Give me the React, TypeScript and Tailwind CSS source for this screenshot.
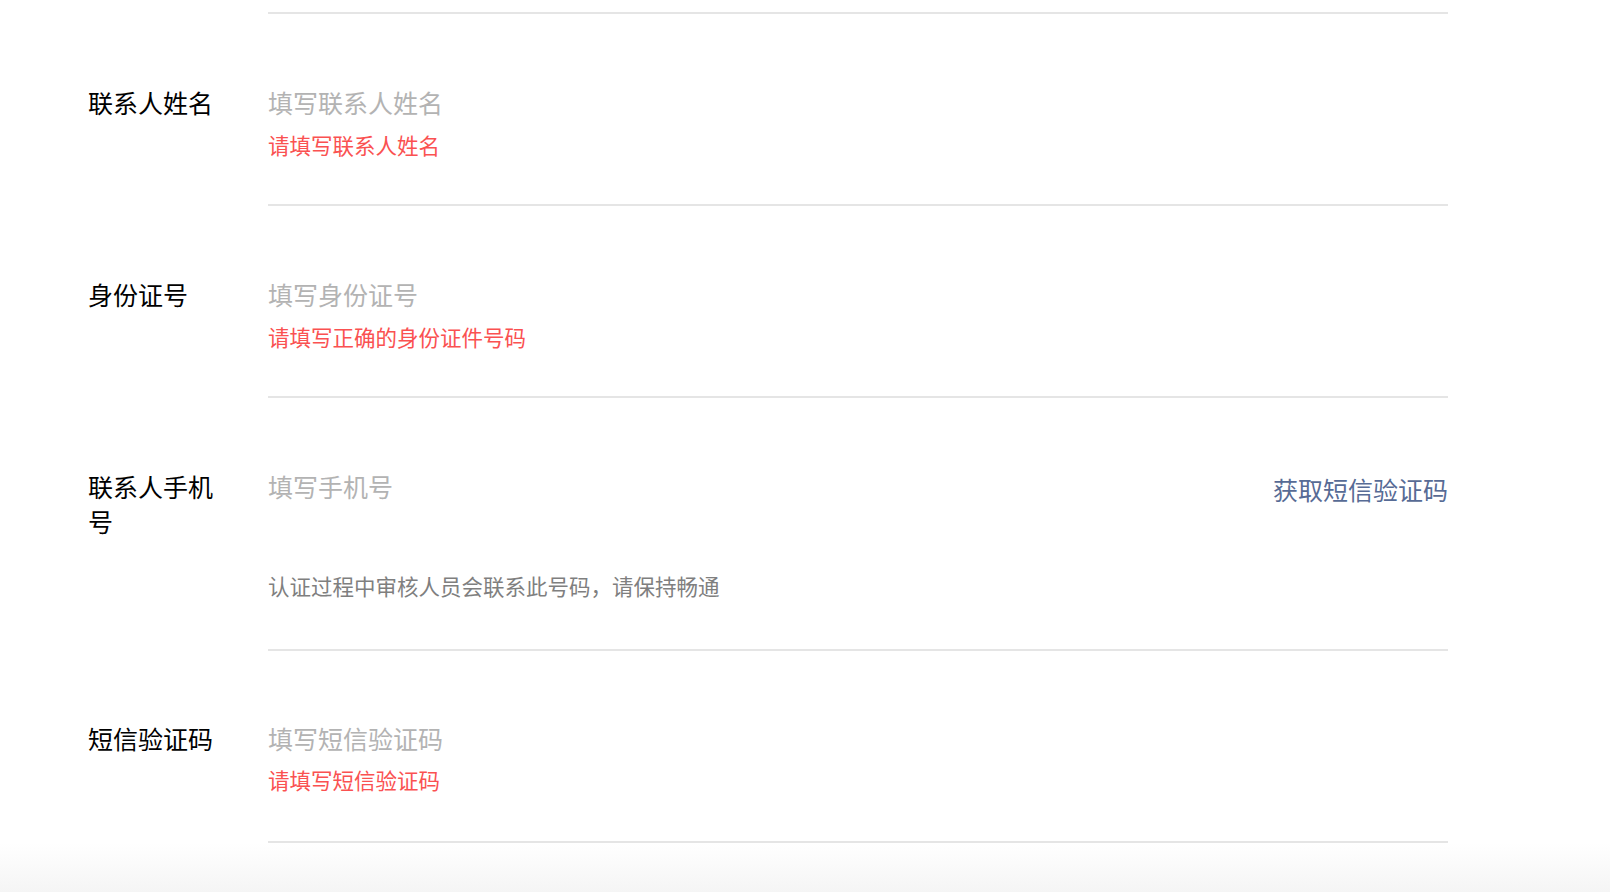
import React from 'react';

type Field = {
  label: string;
  placeholder: string;
  error?: string;
  pt: string;
  labelPt: string;
  errMt?: string;
  pb: string;
};

const fields: Field[] = [
  { label: '联系人姓名', placeholder: '填写联系人姓名', error: '请填写联系人姓名', pt: 'pt-[68px]', labelPt: 'pt-[71px]', errMt: 'mt-[8px]', pb: 'pb-[44px]' },
  { label: '身份证号', placeholder: '填写身份证号', error: '请填写正确的身份证件号码', pt: 'pt-[68px]', labelPt: 'pt-[71px]', errMt: 'mt-[8px]', pb: 'pb-[44px]' },
];

const Label = ({ text, pt }: { text: string; pt: string }) => (
  <div className={`w-[130px] mr-[50px] shrink-0 text-[25px] leading-[35px] text-black ${pt}`}>{text}</div>
);

const TextInput = ({ placeholder }: { placeholder: string }) => (
  <input
    placeholder={placeholder}
    className="flex-1 h-[40px] bg-transparent outline-none text-[25px] leading-[40px] text-black placeholder:text-[#b3b3b3]"
  />
);

const FormRow = ({ f }: { f: Field }) => (
  <div className="flex">
    <Label text={f.label} pt={f.labelPt} />
    <div className={`flex-1 border-b-2 border-[#e5e5e5] ${f.pt} ${f.pb}`}>
      <div className="flex h-[40px]">
        <TextInput placeholder={f.placeholder} />
      </div>
      {f.error && <div className={`text-[21.5px] leading-[30px] text-[#fa5151] ${f.errMt}`}>{f.error}</div>}
    </div>
  </div>
);

export default function App() {
  return (
    <div className="min-h-[892px] bg-white [font-family:'Noto_Sans_CJK_SC',sans-serif] overflow-hidden">
      <div className="pl-[88px] pr-[162px]">
        <div className="ml-[180px] mt-[12px] h-[2px] bg-[#e5e5e5]" />

        {fields.map((f) => (
          <FormRow key={f.label} f={f} />
        ))}

        {/* phone row */}
        <div className="flex">
          <Label text="联系人手机号" pt="pt-[71px]" />
          <div className="flex-1 border-b-2 border-[#e5e5e5] pt-[68px] pb-[48px]">
            <div className="flex h-[40px] items-center">
              <TextInput placeholder="填写手机号" />
              <button className="mt-[6px] text-[25px] leading-[40px] text-[#576b95]">获取短信验证码</button>
            </div>
            <div className="mt-[65px] text-[21.5px] leading-[30px] text-[#7f7f7f]">
              认证过程中审核人员会联系此号码，请保持畅通
            </div>
          </div>
        </div>

        <FormRow
          f={{ label: '短信验证码', placeholder: '填写短信验证码', error: '请填写短信验证码', pt: 'pt-[67px]', labelPt: 'pt-[70px]', errMt: 'mt-[7px]', pb: 'pb-[46px]' }}
        />
      </div>
      <div className="h-[49px] bg-gradient-to-b from-white to-[#f5f5f5]" />
    </div>
  );
}
